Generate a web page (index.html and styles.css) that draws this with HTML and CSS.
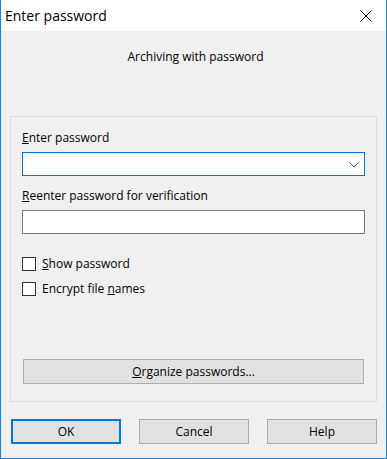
FILE: index.html
```html
<!DOCTYPE html>
<html>
<head>
<meta charset="utf-8">
<link rel="stylesheet" href="styles.css">
</head>
<body>
<div class="window">
  <div class="titlebar">
    <span class="title">Enter password</span>
    <span class="close">
      <svg width="12" height="12" viewBox="0 0 12 12"><path d="M0.5 0.5 L11.5 11.5 M11.5 0.5 L0.5 11.5" stroke="#000" stroke-width="1" fill="none"/></svg>
    </span>
  </div>
  <div class="body">
    <div class="subtitle">Archiving with password</div>
    <div class="group">
      <div class="label"><u>E</u>nter password</div>
      <div class="combo">
        <svg class="chev" width="10" height="6" viewBox="0 0 10 6"><path d="M0.5 0.5 L5 5 L9.5 0.5" stroke="#555" stroke-width="1" fill="none"/></svg>
      </div>
      <div class="label label2"><u>R</u>eenter password for verification</div>
      <div class="input"></div>
      <div class="check check1"><span class="box"></span><span><u>S</u>how password</span></div>
      <div class="check check2"><span class="box"></span><span>Encrypt file <u>n</u>ames</span></div>
      <div class="btn organize"><u>O</u>rganize passwords...</div>
    </div>
    <div class="buttons">
      <div class="btn dlg default">OK</div>
      <div class="btn dlg">Cancel</div>
      <div class="btn dlg">Help</div>
    </div>
  </div>
</div>
</body>
</html>
```
FILE: styles.css
```css
html, body {
  margin: 0;
  padding: 0;
  background: #f0f0f0;
}
body {
  font-family: "Open Sans", "Noto Sans", sans-serif;
  font-size: 12px;
  color: #000;
}
.window {
  width: 387px;
  height: 459px;
  box-sizing: border-box;
  border: 1px solid #1883d7;
  border-top: none;
  background: #f0f0f0;
  display: flex;
  flex-direction: column;
}
.titlebar {
  height: 31px;
  background: #fff;
  display: flex;
  align-items: center;
  justify-content: space-between;
  padding-left: 4px;
  padding-right: 14px;
  flex-shrink: 0;
}
.title {
  font-size: 14px;
  line-height: 20px;
  margin-top: 1px;
}
.close {
  display: flex;
  margin-top: 1px;
}
.body {
  flex: 1;
  display: flex;
  flex-direction: column;
  padding: 18px 9px 0 9px;
}
.subtitle {
  text-align: center;
  line-height: 16px;
  height: 16px;
  margin-left: 4px;
}
.group {
  margin-top: 51px;
  height: 286px;
  box-sizing: border-box;
  border: 1px solid #dcdcdc;
  padding: 13px 11px 17px 11px;
  display: flex;
  flex-direction: column;
}
.label {
  line-height: 16px;
  height: 16px;
}
.combo {
  margin-top: 6px;
  height: 24px;
  box-sizing: border-box;
  border: 1px solid #0078d7;
  background: #fff;
  display: flex;
  align-items: center;
  justify-content: flex-end;
  padding-right: 5px;
}
.chev {
  display: block;
  margin-top: 1px;
}
.label2 {
  margin-top: 12px;
}
.input {
  margin-top: 6px;
  height: 24px;
  box-sizing: border-box;
  border: 1px solid #7a7a7a;
  background: #fff;
}
.check {
  display: flex;
  align-items: center;
  line-height: 16px;
  height: 16px;
  gap: 6px;
}
.check1 {
  margin-top: 22px;
}
.check2 {
  margin-top: 9px;
}
.box {
  width: 14px;
  height: 14px;
  box-sizing: border-box;
  border: 1px solid #333;
  background: #fff;
  flex-shrink: 0;
}
.btn {
  box-sizing: border-box;
  background: #e1e1e1;
  border: 1px solid #adadad;
  height: 25px;
  display: flex;
  align-items: center;
  justify-content: center;
  line-height: 16px;
}
.organize {
  margin: auto 1px 0 1px;
}
.buttons {
  margin-top: 17px;
  display: flex;
  justify-content: space-between;
  padding: 0 0 0 1px;
}
.dlg {
  width: 110px;
}
.default {
  border: 2px solid #0078d7;
}
```
